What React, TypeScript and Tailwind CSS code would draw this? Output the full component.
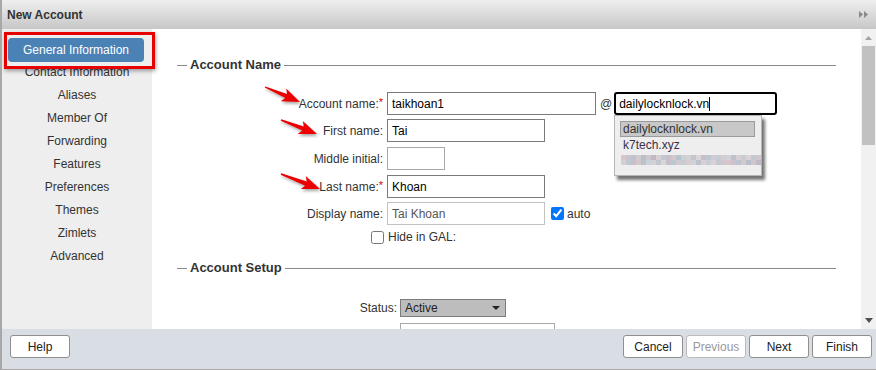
import React from "react";

type Pt = [number, number];

function arrowPoints(t: Pt, h: Pt): string {
  const dx = h[0] - t[0];
  const dy = h[1] - t[1];
  const len = Math.hypot(dx, dy);
  const ux = dx / len;
  const uy = dy / len;
  const nx = -uy;
  const ny = ux;
  const headLen = 15;
  const neck: Pt = [h[0] - ux * headLen, h[1] - uy * headLen];
  const back: Pt = [h[0] - ux * (headLen + 3), h[1] - uy * (headLen + 3)];
  const p = (b: Pt, s: number): string => `${(b[0] + nx * s).toFixed(1)},${(b[1] + ny * s).toFixed(1)}`;
  return [
    p(t, 0.7),
    p(neck, 2.2),
    p(back, 7),
    `${h[0]},${h[1]}`,
    p(back, -7),
    p(neck, -2.2),
    p(t, -0.7),
  ].join(" ");
}

const arrows: [Pt, Pt][] = [
  [[263, 87], [298, 102]],
  [[279, 120], [315, 134]],
  [[279, 174], [318, 189]],
];

const sideItems = [
  "Contact Information",
  "Aliases",
  "Member Of",
  "Forwarding",
  "Features",
  "Preferences",
  "Themes",
  "Zimlets",
  "Advanced",
];

const blurColors = [
  "#d8c4cb", "#c9c3cf", "#bcc4cf", "#d4c9cc", "#b6bfca", "#cdc6cc", "#c0b8c4", "#d9cfd2",
  "#bfc8d3", "#c8c0c8", "#d3c7cb", "#b9c3cc", "#cbd1d8", "#d5d0d3", "#c2c6cd", "#dcd5d8",
  "#c4bfc8", "#bcc7d0", "#d0cbd0", "#c6ccd3", "#d7cdd1", "#cfd3d8", "#bfc2ca", "#d6d1d4",
  "#c8cdd4", "#dad2d6", "#c3c9cf", "#cfc7cc",
];

function Legend({ title }: { title: string }) {
  return (
    <div className="flex items-center h-[16px] px-[25px]">
      <div className="w-[10px] h-px bg-[#8a8a8a]" />
      <span className="mx-[3px] font-bold text-[13px] text-[#333]">{title}</span>
      <div className="flex-1 h-px bg-[#8a8a8a]" />
    </div>
  );
}

function Req() {
  return <span className="text-[#d40000] text-[11px] relative -top-[2px]">*</span>;
}

function Btn({ label, disabled }: { label: string; disabled?: boolean }) {
  return (
    <div
      className={
        "w-[60px] h-[23px] flex items-center justify-center rounded-[3px] bg-white text-[12px] border " +
        (disabled ? "border-[#bbbbbb] text-[#9a9a9a]" : "border-[#8f8f8f] text-[#222]")
      }
    >
      {label}
    </div>
  );
}

export default function App() {
  return (
    <div className="relative w-[876px] h-[370px] overflow-hidden flex flex-col bg-white border-l-2 border-[#a8a8a8] font-['Liberation_Sans',Arial,sans-serif] text-[12px] text-[#333]">
      {/* Title bar */}
      <div className="h-[29px] shrink-0 flex items-center justify-between pl-[5px] pr-[7px] bg-gradient-to-b from-[#efefef] to-[#c7c7c7]">
        <span className="font-bold text-[12px] text-[#333]">New Account</span>
        <svg width="10" height="7" viewBox="0 0 10 7">
          <polygon points="0,0 4,3.5 0,7" fill="#8a8a8a" />
          <polygon points="5,0 9,3.5 5,7" fill="#8a8a8a" />
        </svg>
      </div>

      {/* Body */}
      <div className="flex flex-1 min-h-0">
        {/* Sidebar */}
        <div className="w-[150px] shrink-0 bg-[#eeeeee] flex flex-col pt-[9px]">
          <div className="mx-[6px] w-[136px] h-[24px] rounded-[4px] bg-[#4a82b6] text-white text-[12px] flex items-center justify-center">
            General Information
          </div>
          <div className="flex flex-col -mt-[2px]">
            {sideItems.map((s) => (
              <div key={s} className="h-[23px] flex items-center justify-center text-[12px] text-[#333]">
                {s}
              </div>
            ))}
          </div>
        </div>

        {/* Content */}
        <div className="relative flex-1 min-w-0 overflow-hidden bg-white">
          <div className="flex flex-col pt-[28px]">
            <Legend title="Account Name" />

            {/* Account name */}
            <div className="flex items-center mt-[19px]">
              <div className="w-[231px] text-right text-[12px] text-[#333]">
                Account name:<Req />
              </div>
              <div className="ml-[4px] w-[209px] h-[23px] border border-[#7a7a7a] px-[4px] flex items-center text-[12px] text-black">
                taikhoan1
              </div>
              <span className="ml-[4px] text-[12px] text-[#333]">@</span>
              <div className="ml-[2px] w-[163px] h-[23px] border-2 border-black rounded-[3px] px-[3px] flex items-center text-[12px] text-black">
                dailylocknlock.vn<span className="w-px h-[14px] bg-black" />
              </div>
            </div>

            {/* First name */}
            <div className="flex items-center mt-[4px]">
              <div className="w-[231px] text-right">First name:</div>
              <div className="ml-[4px] w-[158px] h-[23px] border border-[#7a7a7a] px-[4px] flex items-center text-black">
                Tai
              </div>
            </div>

            {/* Middle initial */}
            <div className="flex items-center mt-[5px]">
              <div className="w-[231px] text-right">Middle initial:</div>
              <div className="ml-[4px] w-[58px] h-[23px] border border-[#a9a9a9]" />
            </div>

            {/* Last name */}
            <div className="flex items-center mt-[5px]">
              <div className="w-[231px] text-right">
                Last name:<Req />
              </div>
              <div className="ml-[4px] w-[158px] h-[23px] border border-[#7a7a7a] px-[4px] flex items-center text-black">
                Khoan
              </div>
            </div>

            {/* Display name */}
            <div className="flex items-center mt-[4px]">
              <div className="w-[231px] text-right">Display name:</div>
              <div className="ml-[4px] w-[158px] h-[23px] border border-[#c2c2c2] px-[4px] flex items-center text-[#555]">
                Tai Khoan
              </div>
              <input type="checkbox" defaultChecked className="ml-[6px] w-[13px] h-[13px]" />
              <span className="ml-[3px]">auto</span>
            </div>

            {/* Hide in GAL */}
            <div className="flex items-center mt-[4px] h-[16px] pl-[219px]">
              <input type="checkbox" className="w-[13px] h-[13px]" />
              <span className="ml-[4px]">Hide in GAL:</span>
            </div>

            <div className="mt-[15px]">
              <Legend title="Account Setup" />
            </div>

            {/* Status */}
            <div className="flex items-center mt-[23px]">
              <div className="w-[245px] text-right">Status:</div>
              <div className="ml-[3px] w-[106px] h-[18px] bg-[#bdbdbd] border border-[#7c7c7c] flex items-center justify-between pl-[4px] pr-[5px] text-[12px] text-[#222]">
                <span>Active</span>
                <svg width="8" height="4" viewBox="0 0 8 4">
                  <polygon points="0,0 8,0 4,4" fill="#222" />
                </svg>
              </div>
            </div>

            {/* Partially visible row */}
            <div className="flex items-start mt-[6px]">
              <div className="ml-[248px] w-[155px] h-[23px] border border-[#a9a9a9]" />
              <div className="ml-[6px] mt-[6px] w-[13px] h-[13px] rounded-[2px] bg-[#0075ff]" />
            </div>
          </div>

          {/* Domain autocomplete dropdown */}
          <div className="absolute left-[462px] top-[86px] w-[148px] h-[61px] bg-[#eeeeee] border border-[#b5b5b5] shadow-[3px_4px_3px_rgba(0,0,0,0.55)] flex flex-col pt-[5px] px-[5px]">
            <div className="h-[16px] w-[135px] bg-[#c8c8c8] border border-[#9a9a9a] flex items-center pl-[2px] text-[12px] text-[#333]">
              dailylocknlock.vn
            </div>
            <div className="h-[16px] flex items-center pl-[3px] text-[12px] text-[#3a2f4a]">k7tech.xyz</div>
            <div className="mt-[2px] ml-[1px] flex flex-wrap w-[140px] h-[10px] overflow-hidden">
              {blurColors.map((c, i) => (
                <div key={i} className="w-[5px] h-[5px]" style={{ backgroundColor: c }} />
              ))}
              {blurColors.map((c, i) => (
                <div key={"b" + i} className="w-[5px] h-[5px]" style={{ backgroundColor: blurColors[(i + 7) % blurColors.length] }} />
              ))}
            </div>
          </div>
        </div>

        {/* Scrollbar */}
        <div className="w-[15px] shrink-0 bg-[#f1f1f1] flex flex-col items-center">
          <div className="h-[17px] flex items-center justify-center">
            <svg width="7" height="4" viewBox="0 0 7 4">
              <polygon points="0,4 7,4 3.5,0" fill="#a3a3a3" />
            </svg>
          </div>
          <div className="w-[13px] h-[99px] bg-[#c1c1c1]" />
          <div className="flex-1" />
          <div className="h-[17px] flex items-center justify-center">
            <svg width="8" height="5" viewBox="0 0 8 5">
              <polygon points="0,0 8,0 4,5" fill="#505050" />
            </svg>
          </div>
        </div>
      </div>

      {/* Footer */}
      <div className="h-[41px] shrink-0 bg-[#d9dde4] border-b border-[#a8a8a8] flex items-start pt-[6px] pl-[8px] pr-[4px]">
        <Btn label="Help" />
        <div className="flex-1" />
        <div className="flex gap-[3px]">
          <Btn label="Cancel" />
          <Btn label="Previous" disabled />
          <Btn label="Next" />
          <Btn label="Finish" />
        </div>
      </div>

      {/* Annotation overlays */}
      <div className="absolute left-[2px] top-[32px] w-[151px] h-[37px] border-[3px] border-[#e60000] shadow-[1px_2px_4px_rgba(0,0,0,0.35)] pointer-events-none" />
      <svg
        className="absolute left-0 top-0 pointer-events-none"
        width="876"
        height="370"
        style={{ filter: "drop-shadow(1px 2px 1.5px rgba(0,0,0,0.35))" }}
      >
        {arrows.map(([t, h], i) => (
          <polygon key={i} points={arrowPoints(t, h)} fill="#ee0000" />
        ))}
      </svg>
    </div>
  );
}
